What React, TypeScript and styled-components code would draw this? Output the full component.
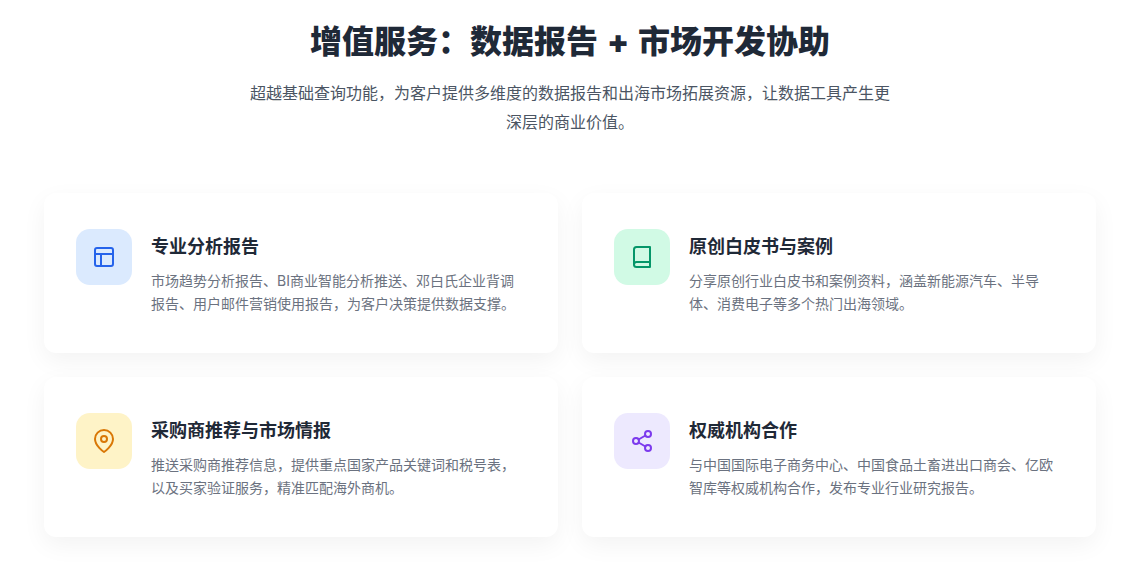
import { FiBook, FiLayout, FiMapPin, FiShare2 } from 'react-icons/fi'
import styled, { createGlobalStyle } from 'styled-components'

const GlobalStyle = createGlobalStyle`
    html, body {
        margin: 0;
        padding: 0;
        background: #ffffff;
    }
    body {
        font-family: Inter, "Noto Sans CJK SC", sans-serif;
    }
`

const services = [
    {
        title: '专业分析报告',
        text: '市场趋势分析报告、BI商业智能分析推送、邓白氏企业背调报告、用户邮件营销使用报告，为客户决策提供数据支撑。',
        icon: FiLayout,
        bg: '#dbeafe',
        fg: '#2563eb',
    },
    {
        title: '原创白皮书与案例',
        text: '分享原创行业白皮书和案例资料，涵盖新能源汽车、半导体、消费电子等多个热门出海领域。',
        icon: FiBook,
        bg: '#d1fae5',
        fg: '#059669',
    },
    {
        title: '采购商推荐与市场情报',
        text: '推送采购商推荐信息，提供重点国家产品关键词和税号表，以及买家验证服务，精准匹配海外商机。',
        icon: FiMapPin,
        bg: '#fef3c7',
        fg: '#d97706',
    },
    {
        title: '权威机构合作',
        text: '与中国国际电子商务中心、中国食品土畜进出口商会、亿欧智库等权威机构合作，发布专业行业研究报告。',
        icon: FiShare2,
        bg: '#ede9fe',
        fg: '#7c3aed',
    },
]

export default function App() {
    return (
        <>
            <GlobalStyle />
            <Section>
                <Header>
                    <Title>增值服务：数据报告 + 市场开发协助</Title>
                    <Subtitle>超越基础查询功能，为客户提供多维度的数据报告和出海市场拓展资源，让数据工具产生更深层的商业价值。</Subtitle>
                </Header>
                <Grid>
                    {services.map((s) => (
                        <Card key={s.title}>
                            <IconBox $bg={s.bg} $fg={s.fg}>
                                <s.icon size={24} />
                            </IconBox>
                            <Body>
                                <CardTitle>{s.title}</CardTitle>
                                <CardText>{s.text}</CardText>
                            </Body>
                        </Card>
                    ))}
                </Grid>
            </Section>
        </>
    )
}

const Section = styled.section`
    width: 1140px;
    height: 568px;
    box-sizing: border-box;
    padding: 18px 44px 0;
    overflow: hidden;
`

const Header = styled.header`
    display: flex;
    flex-direction: column;
    align-items: center;
    margin-bottom: 56px;
`

const Title = styled.h2`
    margin: 0 0 13px;
    font-size: 32px;
    line-height: 48px;
    font-weight: 900;
    word-spacing: 2.5px;
    color: #1f2937;
`

const Subtitle = styled.p`
    margin: 0;
    width: 640px;
    font-size: 16px;
    line-height: 28.8px;
    color: #4b5563;
    text-align: center;
`

const Grid = styled.div`
    display: grid;
    grid-template-columns: 1fr 1fr;
    gap: 24px;
`

const Card = styled.article`
    display: flex;
    gap: 19px;
    height: 160px;
    box-sizing: border-box;
    padding: 36px 32px;
    background: #ffffff;
    border-radius: 12px;
    box-shadow: 0 8px 24px rgba(0, 0, 0, 0.05);
`

const IconBox = styled.div<{ $bg: string; $fg: string }>`
    flex: none;
    display: flex;
    align-items: center;
    justify-content: center;
    width: 56px;
    height: 56px;
    border-radius: 14px;
    background: ${(p) => p.$bg};
    color: ${(p) => p.$fg};
`

const Body = styled.div`
    flex: 1;
    min-width: 0;
    padding-top: 4px;
`

const CardTitle = styled.h3`
    margin: 0 0 9px;
    font-size: 18px;
    line-height: 27px;
    font-weight: 700;
    color: #1f2937;
`

const CardText = styled.p`
    margin: 0;
    font-size: 14px;
    line-height: 23.8px;
    color: #6b7280;
`
